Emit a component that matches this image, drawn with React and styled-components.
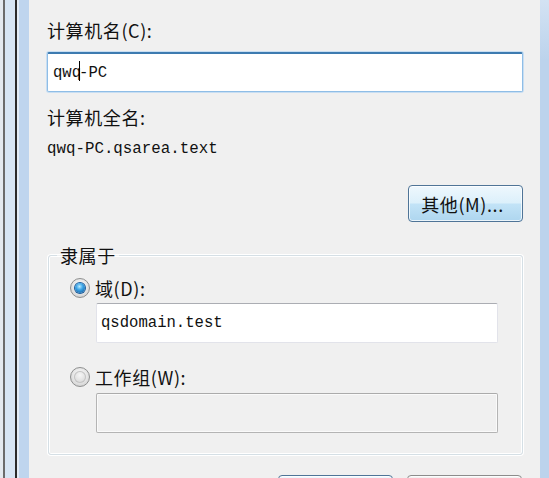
import React from "react";
import styled, { createGlobalStyle } from "styled-components";

const GlobalStyle = createGlobalStyle`
  html, body {
    margin: 0;
    padding: 0;
    height: 478px;
    overflow: hidden;
    background: #f0f0f0;
  }
  * {
    box-sizing: border-box;
  }
`;

const cjk = `"Noto Sans CJK SC", "Noto Sans", sans-serif`;
const mono = `"Liberation Mono", "Noto Sans CJK SC", monospace`;

const Window = styled.div`
  display: flex;
  height: 478px;
  overflow: hidden;
  background: #f0f0f0;
`;

const LeftFrame = styled.div`
  flex: 0 0 29px;
  background: linear-gradient(
    to right,
    #e4e9ef 0 3px,
    #6b6b6b 3px 5px,
    #d7e5f4 5px 15px,
    #2b2b2b 15px 17px,
    #e3ecf6 17px 19px,
    #bfd5ee 19px 29px
  );
`;

const RightFrame = styled.div`
  flex: 0 0 9px;
  margin-left: auto;
  background: linear-gradient(to bottom, #d3e2f3 0, #bcd3ec 60px);
`;

const Panel = styled.div`
  flex: 1;
  display: flex;
  flex-direction: column;
  padding: 19px 17px 0 18px;
  color: #111;
  & > * {
    flex-shrink: 0;
  }
`;

const Label = styled.div`
  font-family: ${cjk};
  font-size: 18px;
  line-height: 22px;
  letter-spacing: 0.6px;
  margin-top: ${(p) => p.$top || 0}px;
`;

const TextBox = styled.div`
  height: 40px;
  margin-top: ${(p) => p.$top || 0}px;
  display: flex;
  align-items: center;
  padding-left: ${(p) => p.$pad || 4}px;
  background: ${(p) => (p.$disabled ? "#f0f0f0" : "#fff")};
  border: 1px solid ${(p) => (p.$disabled ? "#b4b4b4" : "#e2e3ea")};
  border-top-color: ${(p) => (p.$disabled ? "#ababab" : "#abadb3")};
  border-radius: 2px;
  font-family: ${mono};
  font-size: 15.6px;
  color: #111;
  ${(p) =>
    p.$focus &&
    `
    border-color: #8fbde6;
    border-top-color: #3d7bb0;
    border-top-width: 2px;
    box-shadow: 0 0 0 1px #c8def2;
  `}
  ${(p) => p.$disabled && `box-shadow: inset 0 0 0 1px #fafafa;`}
`;

const Caret = styled.span`
  display: inline-block;
  width: 1px;
  height: 20px;
  background: #000;
  margin: -4px -1px 0 -2px;
`;

const FullName = styled.div`
  font-family: ${mono};
  font-size: 15.8px;
  line-height: 20px;
  margin-top: 11px;
`;

const ButtonRow = styled.div`
  display: flex;
  justify-content: flex-end;
  gap: 14px;
  margin-top: ${(p) => p.$top || 0}px;
  padding-right: ${(p) => p.$right || 0}px;
`;

const Button = styled.div`
  width: 115px;
  height: 37px;
  flex: 0 0 auto;
  display: flex;
  align-items: center;
  justify-content: center;
  padding-right: 6px;
  font-family: ${cjk};
  font-size: 18px;
  letter-spacing: 0.6px;
  color: #111;
  border: 1px solid ${(p) => (p.$primary ? "#4f7497" : "#8c8c8c")};
  border-radius: 4px;
  background: ${(p) =>
    p.$primary
      ? "linear-gradient(to bottom, #eef7fd 0%, #dcf0fb 48%, #c2e3f7 52%, #aed6ef 100%)"
      : "linear-gradient(to bottom, #f2f2f2 0%, #ebebeb 48%, #dddddd 52%, #cfcfcf 100%)"};
  box-shadow: inset 0 0 0 1px rgba(255, 255, 255, 0.75);
`;

const Group = styled.fieldset`
  margin: 21px 0 0 1px;
  padding: 10px 24px 21px 21px;
  border: 1px solid #d5dfe5;
  border-radius: 3px;
  box-shadow: inset 0 0 0 1px #fff, 0 0 0 1px #fff;
  min-width: 0;
`;

const Legend = styled.legend`
  font-family: ${cjk};
  font-size: 18px;
  line-height: 24px;
  letter-spacing: 0.6px;
  padding: 0 3px;
  margin-left: -13px;
  color: #111;
`;

const RadioRow = styled.div`
  display: flex;
  align-items: center;
  gap: 5px;
  height: 22px;
  margin-top: ${(p) => p.$top || 0}px;
`;

const Radio = styled.span`
  width: 20px;
  height: 20px;
  border-radius: 50%;
  flex: 0 0 20px;
  display: flex;
  align-items: center;
  justify-content: center;
  border: 1px solid #8e8f8f;
  background: radial-gradient(circle at 50% 40%, #ffffff 0%, #e9e9e9 45%, #c6c6c6 100%);
  &::after {
    content: "";
    width: ${(p) => (p.$checked ? 10 : 12)}px;
    height: ${(p) => (p.$checked ? 10 : 12)}px;
    border-radius: 50%;
    background: ${(p) =>
      p.$checked
        ? "radial-gradient(circle at 45% 35%, #b9ecff 0%, #3aa3e6 40%, #0b4f91 100%)"
        : "radial-gradient(circle at 50% 35%, #f6f6f6 0%, #dcdcdc 70%, #cfcfcf 100%)"};
    box-shadow: ${(p) => (p.$checked ? "0 0 0 1px #1b5d9c" : "inset 0 0 0 1px #c4c4c4")};
  }
`;

const Indented = styled.div`
  margin-left: 26px;
`;

export default function App() {
  return (
    <>
      <GlobalStyle />
      <Window>
        <LeftFrame />
        <Panel>
          <Label>计算机名(C):</Label>
          <TextBox $top={11} $focus $pad={5}>
            qwq<Caret />-PC
          </TextBox>
          <Label $top={14}>计算机全名:</Label>
          <FullName>qwq-PC.qsarea.text</FullName>
          <ButtonRow $top={26}>
            <Button $primary>其他(M)...</Button>
          </ButtonRow>

          <Group>
            <Legend>隶属于</Legend>
            <RadioRow>
              <Radio $checked />
              <Label>域(D):</Label>
            </RadioRow>
            <Indented>
              <TextBox $top={4}>qsdomain.test</TextBox>
            </Indented>
            <RadioRow $top={23}>
              <Radio />
              <Label>工作组(W):</Label>
            </RadioRow>
            <Indented>
              <TextBox $top={5} $disabled />
            </Indented>
          </Group>

          <ButtonRow $top={20} $right={1}>
            <Button $primary />
            <Button />
          </ButtonRow>
        </Panel>
        <RightFrame />
      </Window>
    </>
  );
}
